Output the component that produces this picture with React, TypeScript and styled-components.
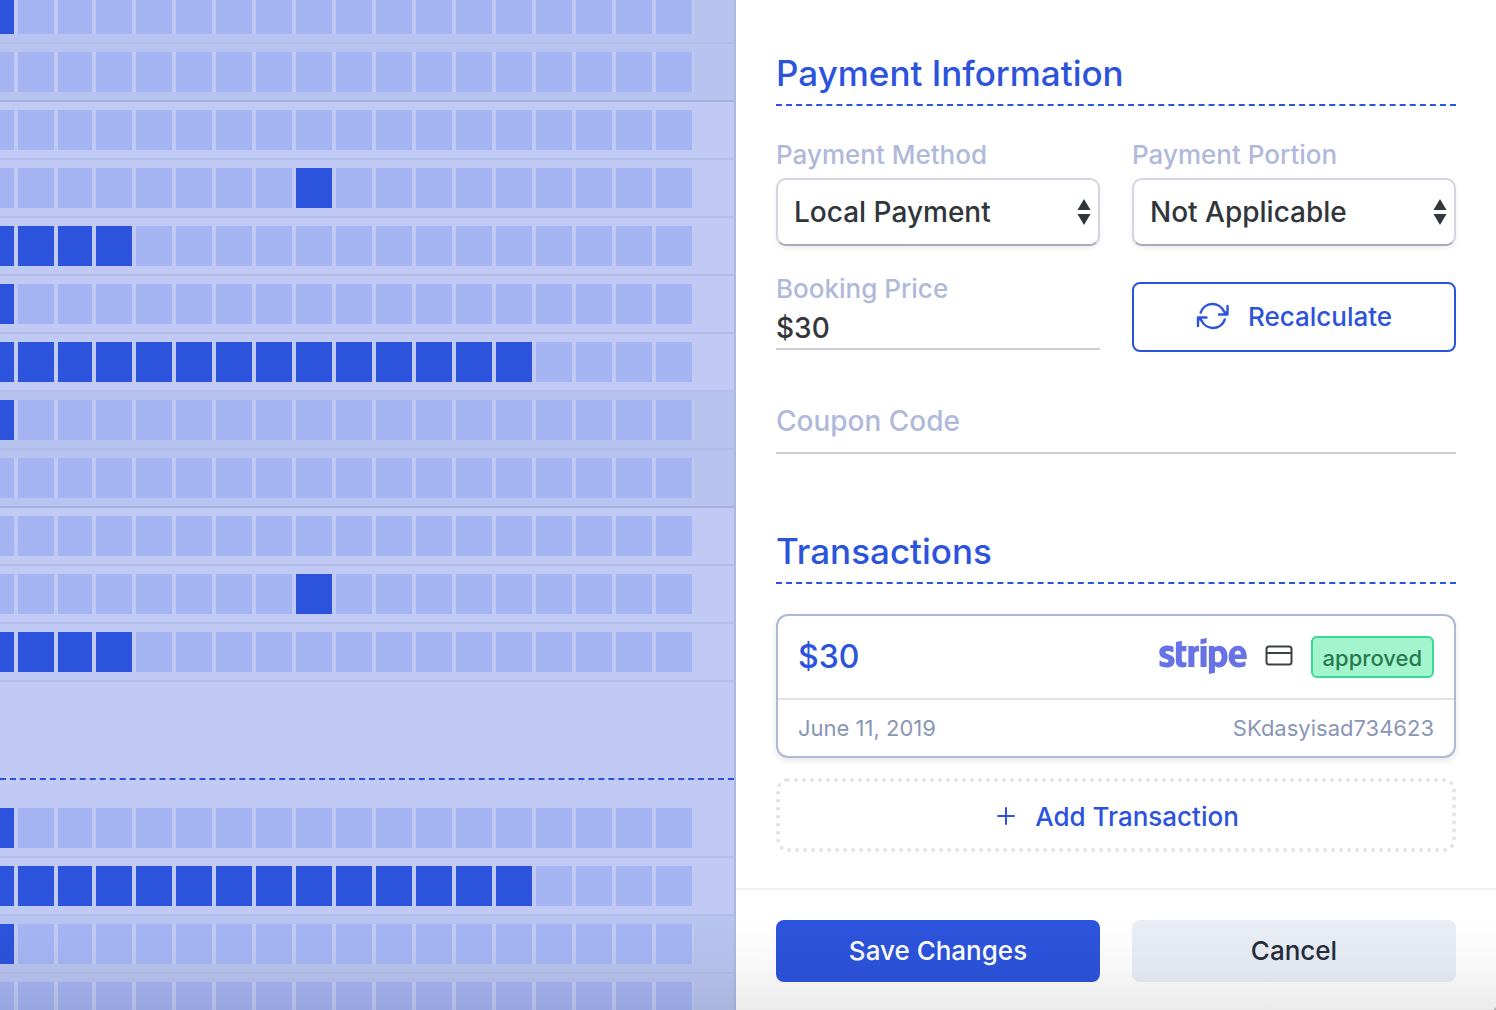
import React from "react";
import styled, { createGlobalStyle } from "styled-components";
import { FaStripe } from "react-icons/fa";

const GlobalStyle = createGlobalStyle`
  *, *::before, *::after { box-sizing: border-box; }
  body { margin: 0; background: #fff; }
  body, button, input, select {
    font-family: Inter, "Liberation Sans", sans-serif;
    font-weight: 500;
  }
`;

const Page = styled.main`
  position: relative;
  display: flex;
  height: 100vh;
  overflow: hidden;
`;

const Schedule = styled.section`
  flex: 1;
  min-width: 0;
  overflow: hidden;
  background: #c0caf4;
`;

const Scrolled = styled.div`
  margin-top: -14px;
`;

const Group = styled.div<{ $divided?: boolean }>`
  ${(p) => p.$divided && "margin-top: 96px; border-top: 2px dashed #2c53dc; padding-top: 20px;"}
`;

const Row = styled.div<{ $shaded?: boolean; $last?: boolean }>`
  display: flex;
  justify-content: flex-end;
  padding: 8px 40px 8px 0;
  background: ${(p) => (p.$shaded ? "#b8c4f0" : "transparent")};
  border-bottom: 2px solid ${(p) => (p.$last ? "#a5b0dc" : "#b2bde8")};
`;

const Track = styled.div`
  display: grid;
  grid-template-columns: 14px 36px 34px repeat(15, 36px);
  gap: 4px;
  padding-right: 2px;
  background: #c0caf4;
`;

const Cell = styled.div<{ $busy: boolean }>`
  height: 40px;
  background: ${(p) => (p.$busy ? "#2c53dc" : "#a5b5f4")};
`;

const Panel = styled.form`
  display: flex;
  flex-direction: column;
  flex: 0 0 762px;
  border-left: 2px solid #aeb7e3;
  background: #fff;
`;

const Body = styled.div`
  flex: 1;
  min-height: 0;
  padding: 49px 40px 0;
`;

const Title = styled.h2`
  margin: 0;
  padding-bottom: 7px;
  border-bottom: 2px dashed #2c53dc;
  color: #2c53dc;
  font-size: 35px;
  font-weight: 500;
  line-height: 48px;
`;

const Fields = styled.div`
  display: grid;
  grid-template-columns: 1fr 1fr;
  gap: 26px 32px;
  margin-top: 32px;
`;

const Label = styled.label`
  display: block;
  color: #b0b9da;
  font-size: 26px;
  line-height: 34px;
`;

const SelectBox = styled.div`
  position: relative;
  margin-top: 6px;
`;

const Select = styled.select`
  display: block;
  width: 100%;
  height: 68px;
  padding: 0 40px 0 16px;
  appearance: none;
  background: #fff;
  border: 2px solid #d5d5e2;
  border-bottom-color: #a6abbb;
  border-radius: 10px;
  box-shadow: 0 2px 4px rgba(0, 0, 0, 0.08);
  color: #30363a;
  font-size: 28px;
`;

const Arrows = styled.svg`
  position: absolute;
  top: 21px;
  right: 9px;
  width: 14px;
  height: 26px;
  fill: #30363a;
  pointer-events: none;
`;

const Input = styled.input<{ $tall?: boolean }>`
  display: block;
  width: 100%;
  height: ${(p) => (p.$tall ? 66 : 44)}px;
  margin-top: ${(p) => (p.$tall ? 36 : 0)}px;
  padding: 2px 0 0;
  border: 0;
  border-bottom: 2px solid #cdccd9;
  border-radius: 0;
  background: transparent;
  color: #30363a;
  font-size: 28px;
  outline: none;
  &::placeholder { color: #b0b9da; opacity: 1; }
`;

const Button = styled.button<{ $kind: "outline" | "primary" | "plain" | "dotted" }>`
  display: flex;
  align-items: center;
  justify-content: center;
  gap: 18px;
  width: 100%;
  height: ${(p) => ({ outline: 70, primary: 62, plain: 62, dotted: 74 })[p.$kind]}px;
  padding: ${(p) => (p.$kind === "dotted" ? "2px 0 0 2px" : "0 0 2px")};
  border: ${(p) => ({ outline: "2px solid #2c53dc", primary: "0", plain: "0", dotted: "4px dotted #e4e4e4" })[p.$kind]};
  border-radius: ${(p) => (p.$kind === "dotted" ? 12 : 8)}px;
  background: ${(p) => ({ outline: "#fff", primary: "#2c53dc", plain: "#e9edf6", dotted: "#fff" })[p.$kind]};
  color: ${(p) => ({ outline: "#2c53dc", primary: "#fff", plain: "#252d3d", dotted: "#2c53dc" })[p.$kind]};
  font-size: 26px;
  cursor: pointer;
`;

const RecalcCell = styled.div`
  padding-top: 10px;
`;

const Transactions = styled.section`
  margin-top: 73px;
`;

const Card = styled.article`
  margin: 30px 0 20px;
  border: 2px solid #aeb7d8;
  border-radius: 12px;
  box-shadow: 0 3px 6px rgba(0, 0, 0, 0.1);
`;

const CardHead = styled.div`
  display: flex;
  align-items: center;
  justify-content: space-between;
  height: 82px;
  padding: 0 20px 2px;
`;

const Amount = styled.strong`
  color: #2c53dc;
  font-size: 32px;
  font-weight: 500;
`;

const Source = styled.div`
  display: flex;
  align-items: center;
  gap: 18px;
`;

const StripeLogo = styled(FaStripe)`
  width: 88px;
  height: 70px;
  color: #6772e5;
`;

const Badge = styled.span`
  height: 42px;
  margin-top: 2px;
  padding: 0 10px;
  border: 2px solid #38d996;
  border-radius: 6px;
  background: #a2f5cc;
  color: #2a7a50;
  font-size: 22px;
  line-height: 40px;
`;

const CardFoot = styled.div`
  display: flex;
  align-items: center;
  justify-content: space-between;
  height: 58px;
  padding: 0 20px;
  border-top: 2px solid #e3e3e5;
  color: #8a96b5;
  font-size: 22px;
  font-weight: 400;
`;

const Footer = styled.footer`
  display: grid;
  grid-template-columns: 1fr 1fr;
  gap: 32px;
  padding: 30px 40px 28px;
  border-top: 2px solid #f1f1f2;
`;

const BottomShade = styled.div`
  position: absolute;
  inset: auto 0 0 0;
  height: 90px;
  pointer-events: none;
  background:
    radial-gradient(circle at 0 0, transparent 9px, #aaa 10px) right bottom / 8px 8px no-repeat,
    linear-gradient(rgba(0, 0, 0, 0), rgba(0, 0, 0, 0.03) 55%, rgba(0, 0, 0, 0.08));
`;

type RowData = { busy: number[]; shaded?: boolean; last?: boolean };

const upTo = (n: number) => Array.from({ length: n }, (_, i) => i);

const groups: RowData[][] = [
  [
    { busy: [0], shaded: true },
    { busy: [], shaded: true, last: true },
    { busy: [] },
    { busy: [8] },
    { busy: upTo(4) },
    { busy: [0] },
    { busy: upTo(14) },
    { busy: [0], shaded: true },
    { busy: [], shaded: true, last: true },
    { busy: [] },
    { busy: [8] },
    { busy: upTo(4) },
  ],
  [
    { busy: [0] },
    { busy: upTo(14) },
    { busy: [0], shaded: true },
    { busy: [], shaded: true, last: true },
  ],
];

function SelectField({ id, label, options }: { id: string; label: string; options: string[] }) {
  return (
    <div>
      <Label htmlFor={id}>{label}</Label>
      <SelectBox>
        <Select id={id}>
          {options.map((o) => (
            <option key={o}>{o}</option>
          ))}
        </Select>
        <Arrows viewBox="0 0 14 26" aria-hidden="true">
          <path d="M7 0l6.500 11H.5zM7 26l6.500-11H.5z" />
        </Arrows>
      </SelectBox>
    </div>
  );
}

export default function App() {
  return (
    <>
      <GlobalStyle />
      <Page>
        <Schedule aria-label="Schedule">
          <Scrolled>
            {groups.map((rows, g) => (
              <Group key={g} $divided={g > 0}>
                {rows.map((row, r) => (
                  <Row key={r} $shaded={row.shaded} $last={row.last}>
                    <Track>
                      {upTo(18).map((i) => (
                        <Cell key={i} $busy={row.busy.includes(i)} />
                      ))}
                    </Track>
                  </Row>
                ))}
              </Group>
            ))}
          </Scrolled>
        </Schedule>
        <Panel onSubmit={(e) => e.preventDefault()}>
          <Body>
            <Title>Payment Information</Title>
            <Fields>
              <SelectField id="method" label="Payment Method" options={["Local Payment"]} />
              <SelectField id="portion" label="Payment Portion" options={["Not Applicable"]} />
              <div>
                <Label htmlFor="price">Booking Price</Label>
                <Input id="price" defaultValue="$30" />
              </div>
              <RecalcCell>
                <Button type="button" $kind="outline">
                  <svg width="34" height="28" viewBox="0 0 34 28" fill="none" stroke="currentColor" strokeWidth="2.400" strokeLinecap="round" strokeLinejoin="round" aria-hidden="true">
                    <path d="M31.500 4v8.500H23M2 24v-8.500h8.500M4.700 10.500A12.500 12.500 0 0 1 28 9.500L31.500 12.500M28.800 17.500A12.500 12.500 0 0 1 5.500 18.500L2 15.500" />
                  </svg>
                  Recalculate
                </Button>
              </RecalcCell>
            </Fields>
            <Input $tall aria-label="Coupon Code" placeholder="Coupon Code" />
            <Transactions>
              <Title>Transactions</Title>
              <Card>
                <CardHead>
                  <Amount>$30</Amount>
                  <Source>
                    <StripeLogo aria-label="stripe" />
                    <svg width="28" height="22" viewBox="0 0 28 22" fill="none" stroke="#3c4045" strokeWidth="2" aria-hidden="true">
                      <rect x="1.500" y="1.500" width="25" height="18" rx="2.500" />
                      <path d="M1.500 8h25" />
                    </svg>
                    <Badge>approved</Badge>
                  </Source>
                </CardHead>
                <CardFoot>
                  <span>June 11, 2019</span>
                  <span>SKdasyisad734623</span>
                </CardFoot>
              </Card>
              <Button type="button" $kind="dotted">
                <svg width="22" height="22" viewBox="0 0 22 22" fill="none" stroke="currentColor" strokeWidth="2" strokeLinecap="round" aria-hidden="true">
                  <path d="M11 3v16M3 11h16" />
                </svg>
                Add Transaction
              </Button>
            </Transactions>
          </Body>
          <Footer>
            <Button type="submit" $kind="primary">Save Changes</Button>
            <Button type="button" $kind="plain">Cancel</Button>
          </Footer>
        </Panel>
        <BottomShade />
      </Page>
    </>
  );
}
